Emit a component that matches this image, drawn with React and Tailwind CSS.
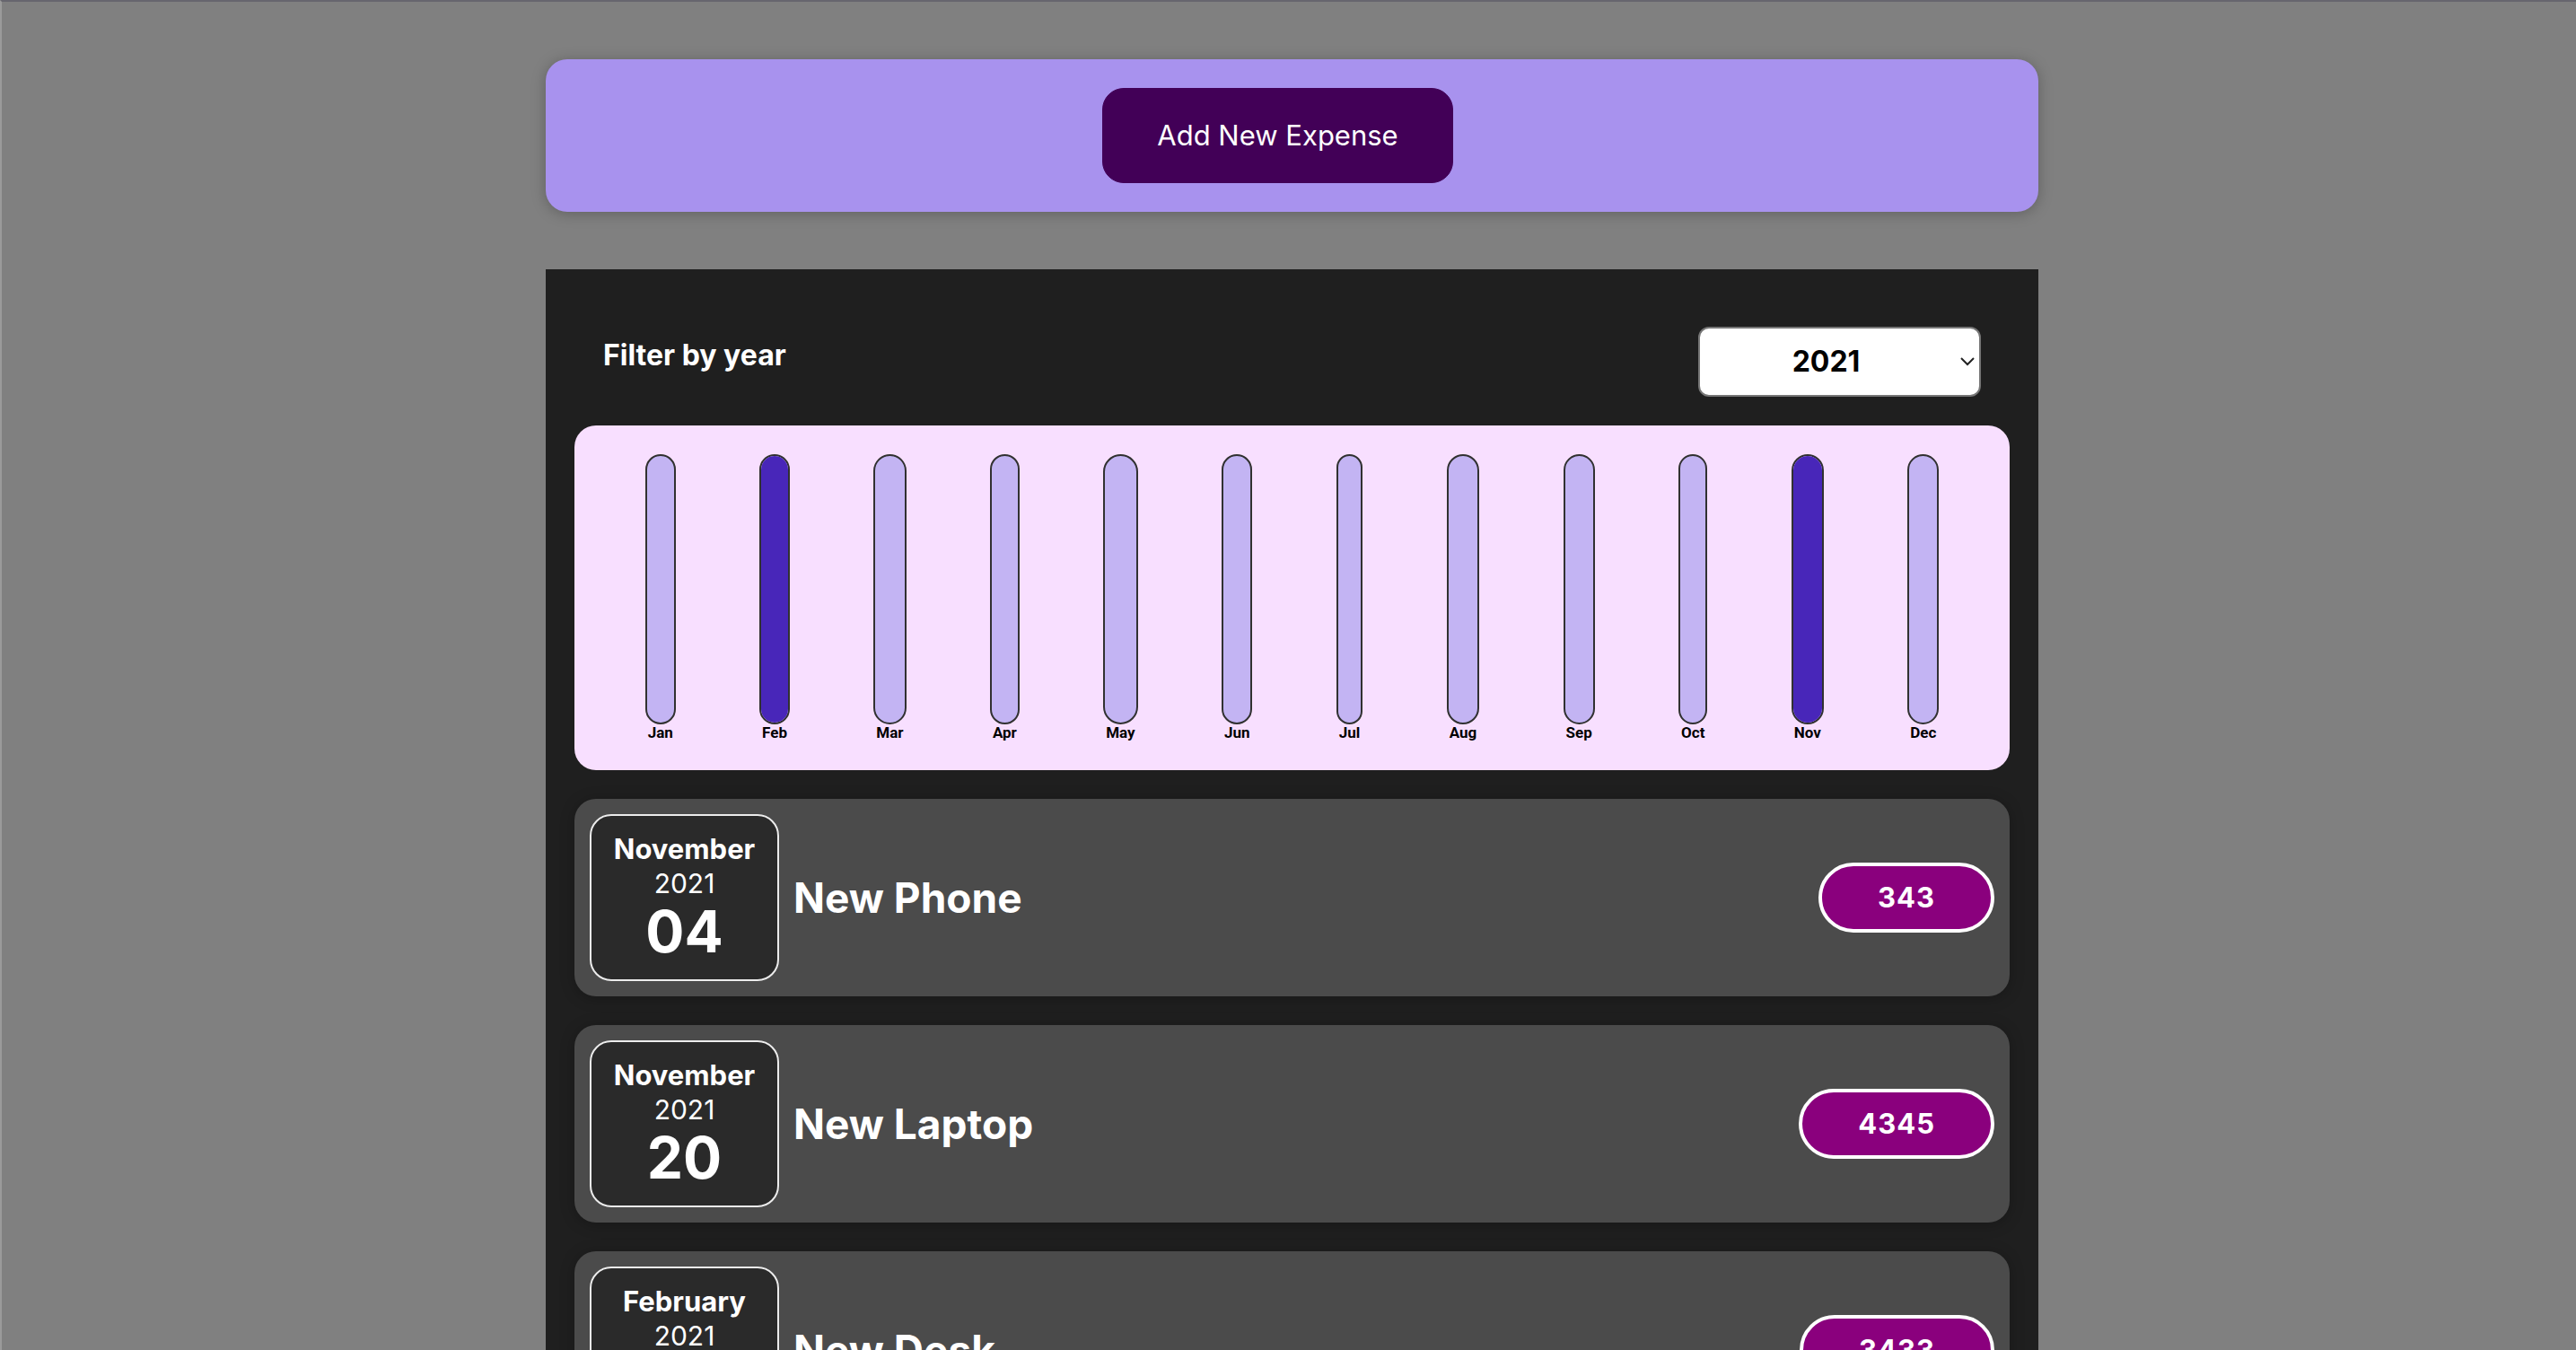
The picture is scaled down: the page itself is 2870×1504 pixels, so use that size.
import React, { useState } from 'react';

const months = ['Jan', 'Feb', 'Mar', 'Apr', 'May', 'Jun', 'Jul', 'Aug', 'Sep', 'Oct', 'Nov', 'Dec'];

const expenses = [
  { id: 'e1', title: 'New Phone', amount: 343, month: 'November', year: '2021', day: '04' },
  { id: 'e2', title: 'New Laptop', amount: 4345, month: 'November', year: '2021', day: '20' },
  { id: 'e3', title: 'New Desk', amount: 3433, month: 'February', year: '2021', day: '12' },
];

// full bars for the months that have expenses
const filled = { Feb: 100, Nov: 100 };

function ChartBar({ label, fill }) {
  return (
    <div className="flex h-full flex-col items-center">
      <div className="flex w-full flex-1 flex-col justify-end overflow-hidden rounded-[24px] border-2 border-[#313131] bg-[#c3b4f3]">
        <div className="w-full bg-[#4826b9]" style={{ height: `${fill}%` }} />
      </div>
      <div className="px-[3px] font-['Roboto',sans-serif] text-[17px] font-bold leading-[19px] text-black">{label}</div>
    </div>
  );
}

function ExpenseDate({ month, year, day }) {
  return (
    <div className="flex h-[186px] w-[211px] flex-col items-center justify-center rounded-[24px] border-2 border-[#ececec] bg-[#2a2a2a] text-white">
      <div className="text-[31px] font-bold leading-[38px]">{month}</div>
      <div className="text-[30px] font-normal leading-[38px]">{year}</div>
      <div className="text-[64px] font-bold leading-[70px]">{day}</div>
    </div>
  );
}

function ExpenseItem({ item }) {
  return (
    <div className="flex items-center justify-between rounded-[24px] bg-[#4b4b4b] p-[17px] shadow-[0_2px_16px_rgba(0,0,0,0.25)]">
      <div className="flex items-center gap-[16px]">
        <ExpenseDate month={item.month} year={item.year} day={item.day} />
        <h2 className="text-[46px] font-bold leading-[54px] text-white">{item.title}</h2>
      </div>
      <div className="rounded-full border-4 border-white bg-[#8a007d] px-[62px] py-[17px] text-[31px] font-bold leading-[36px] tracking-[1px] text-white">
        {item.amount}
      </div>
    </div>
  );
}

export default function App() {
  const [year, setYear] = useState('2021');

  return (
    <div className="min-h-screen border-l-2 border-t-2 border-l-[#9a9a9a] border-t-[#67666e] bg-[#808080] pt-[64px] font-['Inter','Noto_Sans',sans-serif]">
      <div className="ml-[606px] w-[1663px] rounded-[24px] bg-[#a892ee] p-[32px] text-center shadow-[0_2px_16px_rgba(0,0,0,0.25)]">
        <button className="mr-[32px] rounded-[24px] border border-[#420057] bg-[#420057] px-[60px] py-[32px] text-[31px] leading-[40px] text-white">
          Add New Expense
        </button>
      </div>

      <div className="ml-[606px] mt-[64px] w-[1663px] bg-[#1f1f1f] p-[32px]">
        <div className="px-[32px] text-white">
          <div className="my-[32px] flex items-center justify-between">
            <label className="mb-[14px] text-[32px] font-bold leading-[40px]">Filter by year</label>
            <div className="relative">
              <select
                value={year}
                onChange={(e) => setYear(e.target.value)}
                className="h-[78px] w-[315px] appearance-none rounded-[12px] border-2 border-[#767676] bg-white pl-[12px] pr-[42px] text-center text-[32px] font-bold text-black [text-align-last:center]"
              >
                <option value="2022">2022</option>
                <option value="2021">2021</option>
                <option value="2020">2020</option>
                <option value="2019">2019</option>
              </select>
              <svg
                className="pointer-events-none absolute right-[7px] top-[34px] h-[10px] w-[16px]"
                viewBox="0 0 16 10"
                fill="none"
                stroke="#222"
                strokeWidth="2"
              >
                <path d="M1 1l7 7 7-7" />
              </svg>
            </div>
          </div>
        </div>

        <div className="flex h-[384px] justify-around rounded-[24px] bg-[#f8dfff] p-[32px]">
          {months.map((m) => (
            <ChartBar key={m} label={m} fill={filled[m] || 0} />
          ))}
        </div>

        <ul className="mt-[32px] flex flex-col gap-[32px]">
          {expenses.map((item) => (
            <li key={item.id}>
              <ExpenseItem item={item} />
            </li>
          ))}
        </ul>
      </div>
    </div>
  );
}
